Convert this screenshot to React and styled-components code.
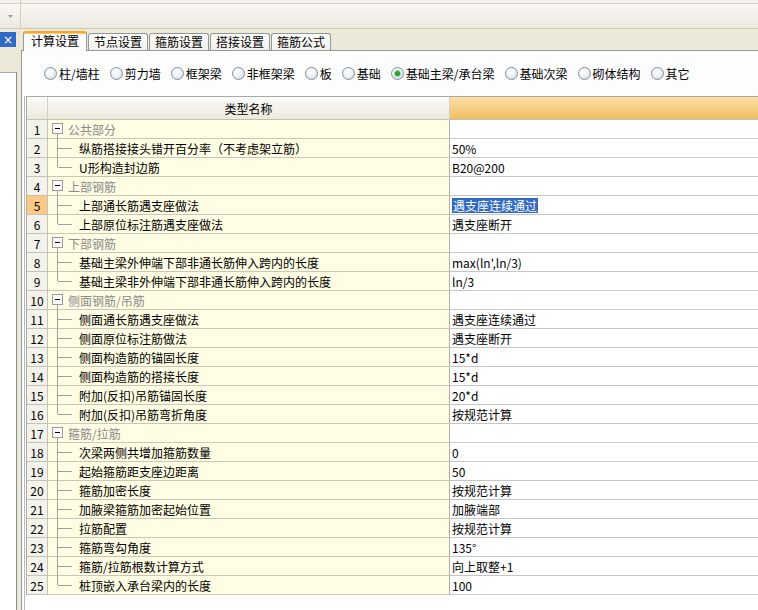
import React from 'react';
import styled, { createGlobalStyle, css } from 'styled-components';

const Global = createGlobalStyle`
  html, body { margin: 0; padding: 0; }
  body {
    font-family: "Noto Sans CJK SC", "Noto Sans", sans-serif;
    font-size: 12px;
    color: #000;
    background: #ece9d8;
  }
`;

const Window = styled.div`
  width: 758px;
  height: 610px;
  overflow: hidden;
  display: flex;
  flex-direction: column;
  background: #ece9d8;
`;

const Toolbar = styled.div`
  height: 29px;
  flex: none;
  display: flex;
  box-sizing: border-box;
  border-bottom: 1px solid #cdcab9;
  background: linear-gradient(
    to bottom,
    #f2f1eb 0,
    #f2f1eb 3px,
    #dad7ca 3px,
    #dad7ca 4px,
    #f9f8f4 4px,
    #ebe9df 100%
  );
`;

const DropCell = styled.div`
  width: 21px;
  box-sizing: border-box;
  border-right: 1px solid #d2cfc2;
  display: flex;
  align-items: center;
  justify-content: center;
  padding-top: 4px;
`;

const Body = styled.div`
  flex: 1;
  display: flex;
  min-height: 0;
`;

const LeftPane = styled.div`
  width: 16px;
  flex: none;
  display: flex;
  flex-direction: column;
  padding-top: 3px;
`;

const TitleBar = styled.div`
  height: 15px;
  background: #316ac5;
  color: #fff;
  display: flex;
  align-items: center;
  justify-content: center;
  font-family: "DejaVu Sans", sans-serif;
  font-size: 12px;
  line-height: 1;
`;

const LeftFiller = styled.div`
  height: 25px;
`;

const LeftList = styled.div`
  flex: 1;
  background: #fff;
  border-top: 1px solid #a7a7a7;
  border-right: 1px solid #8c8c8c;
  margin-right: -1px;
`;

const MainPane = styled.div`
  flex: 1;
  margin-left: 5px;
  display: flex;
  flex-direction: column;
  min-width: 0;
`;

const TabStrip = styled.div`
  height: 21px;
  flex: none;
  display: flex;
  align-items: flex-end;
  padding-left: 2px;
  position: relative;
  z-index: 1;
`;

const Tab = styled.div`
  box-sizing: border-box;
  height: 17px;
  padding: 0 5px;
  margin-right: 1px;
  border: 1px solid #919b9c;
  border-bottom: none;
  border-radius: 3px 3px 0 0;
  background: linear-gradient(#fefefe, #f1f0ea);
  display: flex;
  align-items: center;
  line-height: 1;
  white-space: nowrap;
  ${(p) =>
    p.$active &&
    css`
      height: 20px;
      margin-bottom: -1px;
      padding: 0 7px 2px 7px;
      background: #fcfcfe;
      border-top: 2px solid #f3a93a;
      box-shadow: inset 0 1px 0 #ffc95e;
    `}
`;

const TabPage = styled.div`
  flex: 1;
  background: #fff;
  border-top: 1px solid #919b9c;
  border-left: 1px solid #919b9c;
  display: flex;
  flex-direction: column;
  min-height: 0;
`;

const RadioRow = styled.div`
  height: 45px;
  flex: none;
  display: flex;
  align-items: center;
  padding-left: 22px;
  gap: 10px;
  background: #fdfdfe;
  white-space: nowrap;
`;

const RadioItem = styled.label`
  display: flex;
  align-items: center;
  gap: 2px;
  line-height: 1;
`;

const RadioDot = styled.span`
  width: 13px;
  height: 13px;
  box-sizing: border-box;
  border-radius: 50%;
  border: 1px solid #7c8fa3;
  background: radial-gradient(circle at 40% 35%, #ffffff 0%, #eff1f4 45%, #cdd4dc 100%);
  display: inline-flex;
  align-items: center;
  justify-content: center;
  ${(p) =>
    p.$checked &&
    css`
      &::after {
        content: '';
        width: 5px;
        height: 5px;
        border-radius: 50%;
        background: #2e9f2e;
        box-shadow: 0 0 0 1px #9fd59f;
      }
    `}
`;

const GridWell = styled.div`
  flex: 1;
  margin-left: 2px;
  border-left: 1px solid #b9b9b9;
  padding-left: 1px;
  min-height: 0;
`;

const Grid = styled.div`
  border-left: 1px solid #a9a9a9;
  border-top: 1px solid #a9a9a9;
`;

const cols = '21px 402px 1fr';

const HeaderRow = styled.div`
  display: grid;
  grid-template-columns: ${cols};
  height: 23px;
`;

const HeaderCell = styled.div`
  box-sizing: border-box;
  border-bottom: 1px solid #c2bfb3;
  border-right: 1px solid #d3d0c4;
  display: flex;
  align-items: center;
  justify-content: center;
  background: linear-gradient(#fbfbf9, #ebe8dc);
  ${(p) =>
    p.$hot &&
    css`
      border-right: none;
      background: linear-gradient(#fbe0a8, #f1bd62);
    `}
`;

const Row = styled.div`
  display: grid;
  grid-template-columns: ${cols};
  height: 19px;
`;

const NumCell = styled.div`
  box-sizing: border-box;
  border-right: 1px solid #c6c3b6;
  border-bottom: 1px solid #c6c3b6;
  background: ${(p) => (p.$current ? '#fbca86' : '#f3f2eb')};
  display: flex;
  align-items: center;
  justify-content: center;
  font-size: 12px;
`;

const NameCell = styled.div`
  position: relative;
  box-sizing: border-box;
  border-right: 1px solid #b3b0a4;
  border-bottom: 1px solid #cac7b8;
  background: #fffde3;
  display: flex;
  align-items: center;
  padding-left: ${(p) => (p.$cat ? '20px' : '31px')};
  color: ${(p) => (p.$cat ? '#8a8a8a' : '#000')};
  white-space: nowrap;
`;

const TreeLine = styled.span`
  position: absolute;
  left: 9px;
  width: 1px;
  background: #a0a0a0;
  ${(p) =>
    p.$kind === 'cat' &&
    css`
      top: calc(50% + 5px);
      bottom: -1px;
    `}
  ${(p) =>
    p.$kind === 'mid' &&
    css`
      top: -1px;
      bottom: -1px;
    `}
  ${(p) =>
    p.$kind === 'last' &&
    css`
      top: -1px;
      height: calc(50% + 1px);
    `}
  ${(p) =>
    p.$kind !== 'cat' &&
    css`
      &::after {
        content: '';
        position: absolute;
        left: 1px;
        top: 100%;
        width: 14px;
        height: 1px;
        background: #a0a0a0;
      }
    `}
  ${(p) =>
    p.$kind === 'mid' &&
    css`
      &::after {
        top: 50%;
      }
    `}
`;

const Toggle = styled.span`
  position: absolute;
  left: 4px;
  top: 50%;
  margin-top: -6px;
  width: 11px;
  height: 11px;
  box-sizing: border-box;
  border: 1px solid #9a9a9a;
  background: #fbfbfb;
  display: flex;
  align-items: center;
  justify-content: center;
  &::after {
    content: '';
    width: 5px;
    height: 1px;
    background: #000;
  }
`;

const ValueCell = styled.div`
  box-sizing: border-box;
  border-bottom: 1px solid #c6c6c6;
  background: #fff;
  display: flex;
  align-items: center;
  padding-left: 2px;
  white-space: nowrap;
`;

const Selected = styled.span`
  background: #316ac5;
  color: #fff;
  padding: 0 1px;
  line-height: 15px;
`;

const radios = [
  '柱/墙柱',
  '剪力墙',
  '框架梁',
  '非框架梁',
  '板',
  '基础',
  '基础主梁/承台梁',
  '基础次梁',
  '砌体结构',
  '其它',
];

const tabs = ['计算设置', '节点设置', '箍筋设置', '搭接设置', '箍筋公式'];

const rows = [
  { n: 1, cat: true, name: '公共部分' },
  { n: 2, name: '纵筋搭接接头错开百分率（不考虑架立筋）', value: '50%' },
  { n: 3, name: 'U形构造封边筋', value: 'B20@200', last: true },
  { n: 4, cat: true, name: '上部钢筋' },
  { n: 5, name: '上部通长筋遇支座做法', value: '遇支座连续通过', selected: true },
  { n: 6, name: '上部原位标注筋遇支座做法', value: '遇支座断开', last: true },
  { n: 7, cat: true, name: '下部钢筋' },
  { n: 8, name: '基础主梁外伸端下部非通长筋伸入跨内的长度', value: "max(ln',ln/3)" },
  { n: 9, name: '基础主梁非外伸端下部非通长筋伸入跨内的长度', value: 'ln/3', last: true },
  { n: 10, cat: true, name: '侧面钢筋/吊筋' },
  { n: 11, name: '侧面通长筋遇支座做法', value: '遇支座连续通过' },
  { n: 12, name: '侧面原位标注筋做法', value: '遇支座断开' },
  { n: 13, name: '侧面构造筋的锚固长度', value: '15*d' },
  { n: 14, name: '侧面构造筋的搭接长度', value: '15*d' },
  { n: 15, name: '附加(反扣)吊筋锚固长度', value: '20*d' },
  { n: 16, name: '附加(反扣)吊筋弯折角度', value: '按规范计算', last: true },
  { n: 17, cat: true, name: '箍筋/拉筋' },
  { n: 18, name: '次梁两侧共增加箍筋数量', value: '0' },
  { n: 19, name: '起始箍筋距支座边距离', value: '50' },
  { n: 20, name: '箍筋加密长度', value: '按规范计算' },
  { n: 21, name: '加腋梁箍筋加密起始位置', value: '加腋端部' },
  { n: 22, name: '拉筋配置', value: '按规范计算' },
  { n: 23, name: '箍筋弯勾角度', value: '135°' },
  { n: 24, name: '箍筋/拉筋根数计算方式', value: '向上取整+1' },
  { n: 25, name: '桩顶嵌入承台梁内的长度', value: '100', last: true },
];

export default function App() {
  return (
    <Window>
      <Global />
      <Toolbar>
        <DropCell>
          <svg width="5" height="3" viewBox="0 0 5 3">
            <path d="M0 0h5L2.5 3z" fill="#9a9a9a" />
          </svg>
        </DropCell>
      </Toolbar>
      <Body>
        <LeftPane>
          <TitleBar>×</TitleBar>
          <LeftFiller />
          <LeftList />
        </LeftPane>
        <MainPane>
          <TabStrip>
            {tabs.map((t, i) => (
              <Tab key={t} $active={i === 0}>
                {t}
              </Tab>
            ))}
          </TabStrip>
          <TabPage>
            <RadioRow>
              {radios.map((r, i) => (
                <RadioItem key={r}>
                  <RadioDot $checked={i === 6} />
                  {r}
                </RadioItem>
              ))}
            </RadioRow>
            <GridWell>
              <Grid>
                <HeaderRow>
                  <HeaderCell />
                  <HeaderCell>类型名称</HeaderCell>
                  <HeaderCell $hot />
                </HeaderRow>
                {rows.map((r) => (
                  <Row key={r.n}>
                    <NumCell $current={r.n === 5}>{r.n}</NumCell>
                    <NameCell $cat={r.cat}>
                      {r.cat ? (
                        <>
                          <TreeLine $kind="cat" />
                          <Toggle />
                        </>
                      ) : (
                        <TreeLine $kind={r.last ? 'last' : 'mid'} />
                      )}
                      {r.name}
                    </NameCell>
                    <ValueCell>
                      {r.selected ? <Selected>{r.value}</Selected> : r.value}
                    </ValueCell>
                  </Row>
                ))}
              </Grid>
            </GridWell>
          </TabPage>
        </MainPane>
      </Body>
    </Window>
  );
}
